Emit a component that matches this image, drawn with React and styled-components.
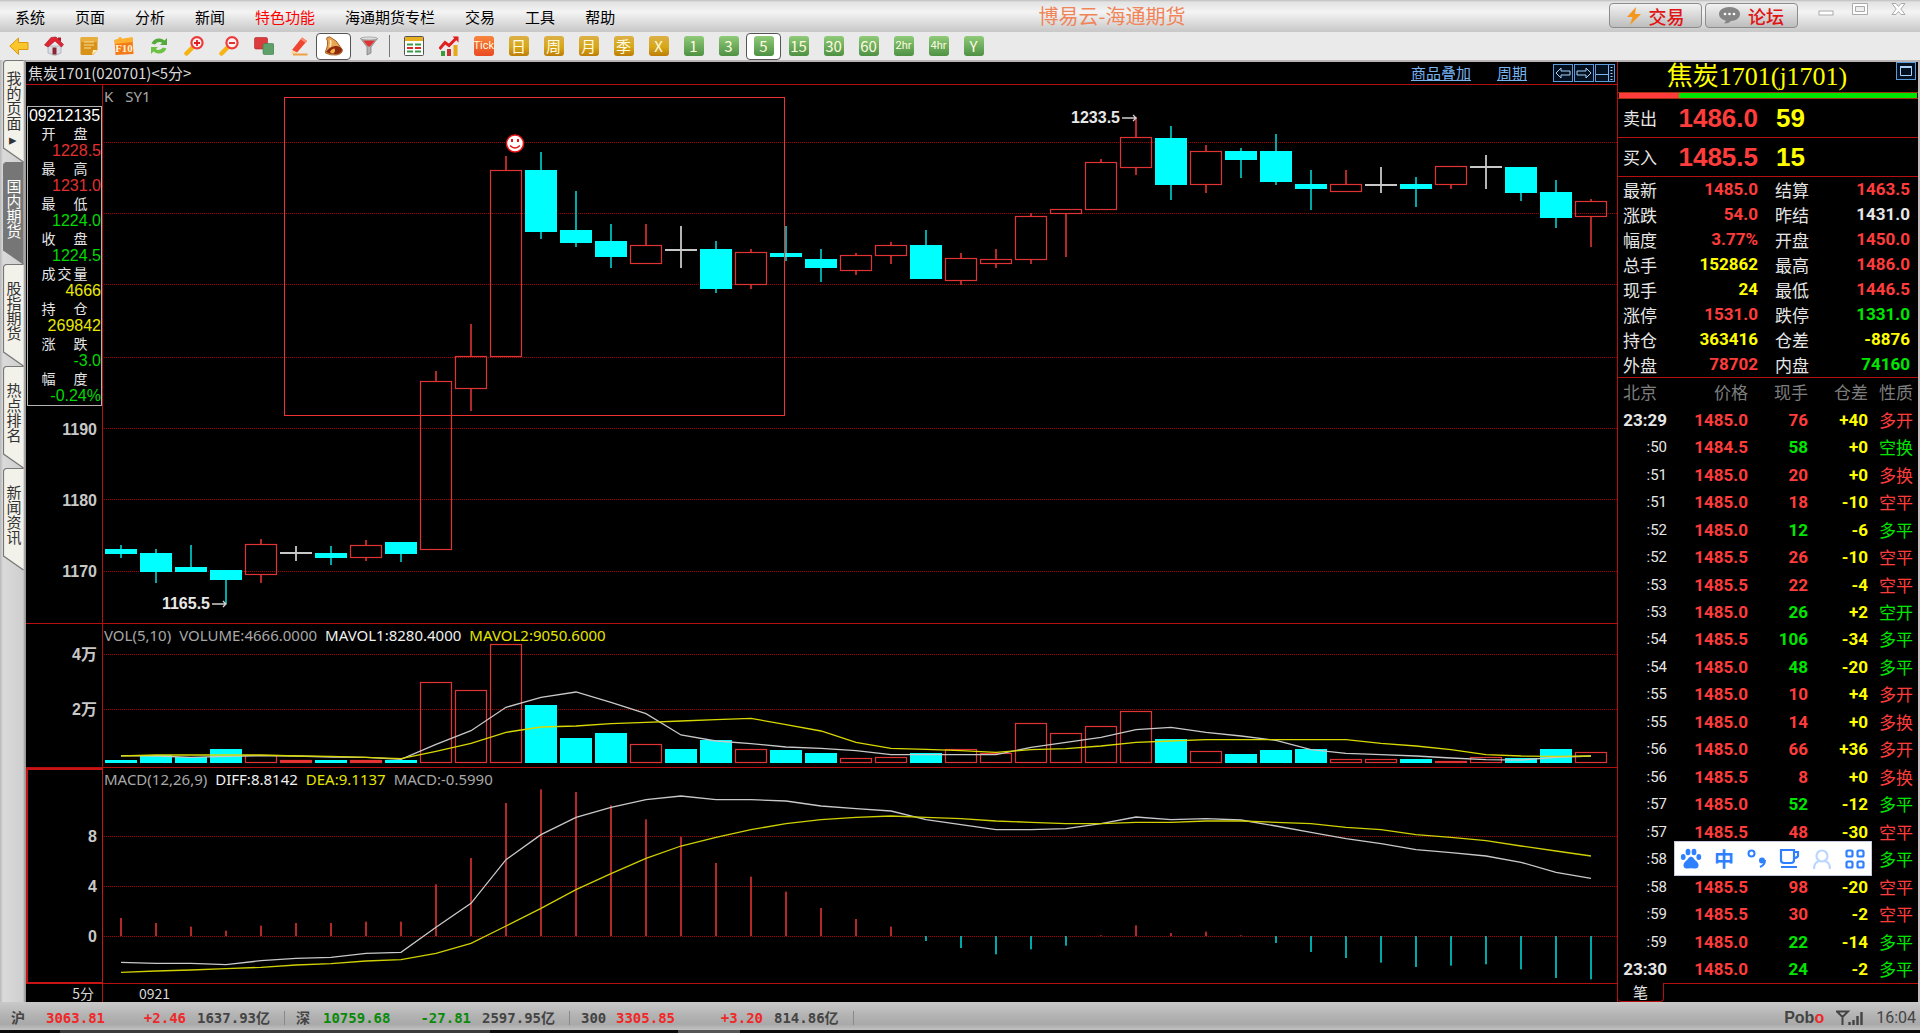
import React from 'react';
import styled, { createGlobalStyle, css } from 'styled-components';

const RED = '#ff3c3c';
const GREEN = '#00e600';
const YELLOW = '#ffff00';
const WHITE = '#e6e6e6';
const LINE = '#b41010';
const CYAN = '#00ffff';

const cjk = '"Noto Sans CJK SC", sans-serif';
const arial = '"Liberation Sans", "Noto Sans CJK SC", sans-serif';

const Global = createGlobalStyle`
  * { box-sizing: border-box; }
  body { margin: 0; background: #000; font-family: ${cjk}; font-size: 15px; line-height: 20px; }
  button { font: inherit; color: inherit; background: none; border: 0; padding: 0; margin: 0; cursor: pointer; }
  svg { display: block; }
`;

const Page = styled.div`
  display: flex;
  flex-direction: column;
  min-height: 100vh;
`;

/* ---------- menu bar ---------- */
const MenuBar = styled.header`
  display: grid;
  grid-template-columns: auto 1fr auto;
  height: 32px;
  padding: 0 11px 0 15px;
  background: linear-gradient(#bdbdbd 0, #e2e2e2 2px, #f4f4f4 12px, #c9c9c9 31px);
`;
const Menus = styled.nav`
  display: flex;
  align-items: center;
  gap: 30px;
  padding-top: 1px;
`;
const MenuItem = styled.button`
  color: ${(p) => (p.$hot ? '#ff0000' : '#000')};
  white-space: nowrap;
`;
const AppTitle = styled.h1`
  margin: 0;
  text-align: center;
  font-size: 20px;
  line-height: 32px;
  font-weight: 400;
  color: #f0855a;
`;
const TopRight = styled.div`
  display: flex;
  justify-content: flex-end;
  align-items: flex-start;
  gap: 3px;
`;
const PillButton = styled.button`
  display: flex;
  align-items: center;
  justify-content: center;
  gap: 8px;
  width: 93px;
  height: 25px;
  margin-top: 3px;
  border: 1px solid #8c8c8c;
  border-radius: 4px;
  background: linear-gradient(#f2f2f2, #d8d8d8 50%, #bdbdbd);
  color: #e01414;
  font-size: 18px;
  line-height: 20px;
  font-weight: 500;
`;
const WindowButtons = styled.div`
  display: flex;
  gap: 14px;
  padding: 2px 0 0 14px;
`;
const WindowButton = styled.button`
  width: 22px;
  height: 16px;
`;

/* ---------- tool bar ---------- */
const ToolBar = styled.div`
  display: flex;
  align-items: center;
  height: 30px;
  padding-left: 1px;
  background: #eaeaea;
  border-bottom: 2px solid #b9b3b3;
`;
const ToolButton = styled.button`
  display: flex;
  align-items: center;
  justify-content: center;
  width: 35px;
  height: 27px;
  border: 1px solid transparent;
  border-radius: 4px;
  ${(p) => p.$active && css`
    background: #fff;
    border-color: #555;
  `}
`;
const Divider = styled.span`
  width: 1px;
  height: 22px;
  margin: 0 6px 0 3px;
  background: #777;
`;
const Badge = styled.span`
  width: 20px;
  height: 20px;
  border-radius: 3px;
  line-height: 20px;
  text-align: center;
  color: #fffbe0;
  font-family: ${(p) => (p.$small ? 'Roboto, sans-serif' : cjk)};
  font-size: ${(p) => (p.$small ? 11 : 15)}px;
  background: ${(p) => ({
    green: 'linear-gradient(#8fcb78, #4f9144)',
    gold: 'linear-gradient(#dcb048, #d7a818 55%, #bd7d08)',
    orange: 'linear-gradient(#f7863c, #ea4a22)',
  }[p.$tone])};
`;

/* ---------- work area ---------- */
const Work = styled.div`
  display: grid;
  grid-template-columns: 26px minmax(0, 1fr) 303px;
  background: #000;
`;
const Tabs = styled.nav`
  display: flex;
  flex-direction: column;
  padding-left: 3px;
  background: linear-gradient(90deg, #b8b8b8, #dadada 3px, #cfcfcf 23px, #9d9898 25px);
  margin-top: -2px;
`;
const Tab = styled.button`
  position: relative;
  display: flex;
  justify-content: center;
  align-items: flex-start;
  width: 21px;
  height: 102px;
  padding-top: ${(p) => (p.$arrow ? 11 : 17)}px;
  color: ${(p) => (p.$active ? '#fff' : '#333')};
`;
const TabShape = styled.svg`
  position: absolute;
  inset: 0;
`;
const TabText = styled.span`
  position: relative;
  writing-mode: vertical-rl;
  text-orientation: upright;
  text-align: start;
  white-space: nowrap;
`;

const ChartArea = styled.main`
  display: grid;
  grid-template-columns: 77px minmax(0, 1fr);
  grid-template-rows: 23px 539px 144px 216px 18px;
`;
const ChartHeader = styled.div`
  grid-column: 1 / -1;
  display: flex;
  align-items: center;
  justify-content: space-between;
  padding: 0 2px;
  border-bottom: 1px solid ${LINE};
  color: #d8d8d8;
`;
const HeaderTools = styled.div`
  display: flex;
  align-items: center;
  gap: 26px;
`;
const HeaderLink = styled.a`
  color: #78b4f0;
  text-decoration: underline;
`;
const BoxButtons = styled.div`
  display: flex;
  gap: 1px;
`;
const BoxButton = styled.button`
  width: 20px;
  height: 18px;
  border: 1px solid #5c9ade;
  background: #03101f;
`;
const AxisCell = styled.div`
  display: flex;
  flex-direction: column;
  align-items: flex-end;
  gap: ${(p) => p.$gap}px;
  padding: ${(p) => p.$top}px 0 0;
  border-right: 1px solid ${LINE};
  border-bottom: 1px solid ${LINE};
  ${(p) => p.$selected && css`
    border: 2px solid #c81414;
    border-right-width: 1px;
  `}
`;
const AxisLabel = styled.span`
  padding-right: 5px;
  font: 700 16px/16px ${arial};
  color: #c8c8c8;
`;
const Plot = styled.section`
  position: relative;
  min-width: 0;
  border-bottom: 1px solid ${LINE};
`;
const PlotSvg = styled.svg`
  width: 100%;
  height: 100%;
`;
const Legend = styled.div`
  position: absolute;
  top: 1px;
  left: 1px;
  display: flex;
  gap: ${(p) => p.$gap || 8}px;
  font: 15px/20px "Noto Sans", sans-serif;
  white-space: nowrap;
`;
const LegendText = styled.span`
  color: ${(p) => p.$color || '#a8a8a8'};
`;
const PriceNote = styled.span`
  position: absolute;
  display: flex;
  align-items: center;
  gap: 2px;
  transform: translate(-100%, -50%);
  font: 700 16px/16px ${arial};
  color: #e8e8e8;
`;
const CandleInfo = styled.dl`
  width: 75px;
  margin: 0 0 0 1px;
  align-self: flex-start;
  border: 1px solid #b4b4b4;
  font: 16px/18px ${arial};
  color: #fff;
`;
const InfoTime = styled.div`
  height: 18px;
  text-align: center;
`;
const InfoTerm = styled.dt`
  display: flex;
  justify-content: space-between;
  width: 46px;
  height: 17px;
  margin: 0 auto;
  font: 14px/17px ${cjk};
  color: ${WHITE};
`;
const InfoValue = styled.dd`
  margin: 0;
  height: 18px;
  text-align: right;
  color: ${(p) => p.$color};
`;
const Scale = styled.div`
  display: flex;
  flex-direction: column;
  gap: 55px;
  margin-top: -39px;
`;
const PeriodCell = styled.div`
  padding-right: 8px;
  border-right: 1px solid ${LINE};
  text-align: right;
  font-size: 14px;
  line-height: 18px;
  color: #d8d8d8;
`;
const DateCell = styled.div`
  padding-left: 36px;
  font-size: 14px;
  line-height: 18px;
  color: #d8d8d8;
`;

/* ---------- quote panel ---------- */
const Quote = styled.aside`
  display: flex;
  flex-direction: column;
  border-left: 1px solid ${LINE};
  border-right: 2px solid #c4bcbc;
`;
const QuoteTitle = styled.div`
  display: grid;
  grid-template-columns: 1fr 22px;
  height: 30px;
`;
const QuoteName = styled.h2`
  margin: 0;
  text-align: center;
  white-space: nowrap;
  font: 400 26px/30px "Liberation Serif", "Noto Sans CJK SC", serif;
  color: ${YELLOW};
`;
const Ratio = styled.div`
  display: flex;
  height: 7px;
  padding: 0 1px;
  border: 1px solid #a03010;
  border-width: 1px 0;
`;
const RatioPart = styled.span`
  flex: ${(p) => p.$share};
  background: ${(p) => p.$color};
`;
const Book = styled.div`
  display: grid;
  grid-template-columns: 36px 99px 1fr;
  align-items: center;
  height: ${(p) => p.$h}px;
  padding-left: 5px;
  border-bottom: 1px solid ${LINE};
  font: 700 26px/38px ${arial};
`;
const BookLabel = styled.span`
  font: 400 17px/38px ${cjk};
  color: ${WHITE};
`;
const BookPrice = styled.span`
  text-align: right;
  color: ${RED};
`;
const BookVolume = styled.span`
  padding-left: 18px;
  color: ${YELLOW};
`;
const Stats = styled.dl`
  display: grid;
  grid-template-columns: 36px 99px 53px 99px;
  margin: 0;
  padding-left: 5px;
  border-bottom: 1px solid ${LINE};
  line-height: 25px;
`;
const StatLabel = styled.dt`
  padding-left: ${(p) => (p.$second ? 17 : 0)}px;
  font-size: 17px;
  color: ${WHITE};
`;
const StatValue = styled.dd`
  margin: 0;
  text-align: right;
  font: 700 17px/25px Roboto, sans-serif;
  color: ${(p) => p.$color};
`;
const Ticks = styled.table`
  flex: 1;
  width: 100%;
  height: 605px;
  border-collapse: collapse;
  table-layout: fixed;
`;
const Th = styled.th`
  height: 28px;
  padding: 0 ${(p) => p.$pad || 0}px 0 0;
  text-align: right;
  width: ${(p) => p.$w}px;
  font: 400 17px/20px ${cjk};
  color: #7d7d7d;
  white-space: nowrap;
`;
const Td = styled.td`
  padding: 0 ${(p) => p.$pad || 0}px 0 0;
  text-align: right;
  white-space: nowrap;
  color: ${(p) => p.$color};
  font: ${(p) => (p.$cjk ? `400 17px/20px ${cjk}` : `${p.$thin ? '400 15px' : '700 17px'}/20px Roboto, sans-serif`)};
`;
const PenRow = styled.div`
  display: flex;
  height: 19px;
`;
const PenTab = styled.button`
  width: 46px;
  height: 19px;
  border: 1px solid ${LINE};
  border-width: 0 1px 1px 0;
  border-radius: 0 0 4px 4px;
  color: ${WHITE};
  line-height: 18px;
`;
const PenFill = styled.div`
  flex: 1;
  border-top: 1px solid ${LINE};
`;

/* ---------- status bar ---------- */
const StatusBar = styled.footer`
  display: flex;
  align-items: center;
  height: 28px;
  padding: 3px 4px 0 11px;
  background: linear-gradient(#c9c9c9, #b2b2b2 50%, #a9a9a9 80%, #c2c2c2);
  color: #444;
  font: 700 14px/20px "DejaVu Sans Mono", "Noto Sans CJK SC", monospace;
`;
const Index = styled.div`
  display: grid;
  grid-template-columns: ${(p) => p.$cols};
  align-items: center;
  height: 20px;
  margin-right: 11px;
  background: linear-gradient(#888, #888) right center / 1px 14px no-repeat;
  white-space: nowrap;
`;
const IndexCell = styled.span`
  color: ${(p) => p.$color || '#444'};
  text-align: ${(p) => (p.$right ? 'right' : 'left')};
  padding-right: ${(p) => (p.$right ? 11 : 0)}px;
`;
const StatusRight = styled.div`
  display: flex;
  align-items: center;
  gap: 12px;
  margin-left: auto;
  font: 400 16px/20px Roboto, sans-serif;
`;
const Brand = styled.span`
  font: 700 16px/20px ${arial};
`;
const BrandDot = styled.span`
  color: #f02828;
`;
const Desk = styled.div`
  flex: 1;
  min-height: 3px;
  background: linear-gradient(90deg, #0a0a0a 60px, #3a3a3a 60px, #3a3a3a 490px, #0a0a0a 490px, #0a0a0a 678px, #555 678px, #555 740px, #0a0a0a 740px);
`;

/* ---------- floating input method bar ---------- */
const ImeBar = styled.div`
  position: absolute;
  top: 841px;
  right: 48px;
  display: flex;
  align-items: center;
  justify-content: space-around;
  width: 198px;
  height: 35px;
  border: 1px solid #c3cbe0;
  background: #fff;
  color: #2f80ff;
`;
const ImeButton = styled.button`
  display: flex;
  align-items: center;
  justify-content: center;
  width: 24px;
  height: 28px;
  font: 700 20px/28px ${cjk};
`;

/* ================= data ================= */
const X0 = 121;
const STEP = 35;
const cx = (i) => X0 + i * STEP;

// kind, body top, body bottom, high, low
const candles = [
  ['c', 549, 554, 545, 558], ['c', 553, 572, 549, 583], ['c', 567, 572, 545, 572], ['c', 570, 580, 570, 604],
  ['r', 545, 575, 539, 583], ['w', 553, 553, 546, 561], ['c', 553, 558, 546, 565], ['r', 546, 558, 540, 561],
  ['c', 542, 554, 542, 562], ['r', 382, 550, 371, 550], ['r', 357, 389, 324, 411], ['r', 171, 357, 156, 357],
  ['c', 170, 232, 152, 239], ['c', 230, 243, 191, 247], ['c', 241, 257, 224, 268], ['r', 246, 264, 224, 264],
  ['w', 250, 250, 226, 268], ['c', 249, 289, 241, 293], ['r', 253, 285, 249, 289], ['c', 253, 257, 226, 261],
  ['c', 259, 268, 249, 282], ['r', 256, 271, 253, 275], ['r', 246, 256, 242, 264], ['c', 245, 279, 230, 279],
  ['r', 259, 281, 253, 285], ['r', 260, 264, 249, 268], ['r', 217, 260, 213, 264], ['r', 210, 214, 210, 257],
  ['r', 163, 210, 159, 210], ['r', 138, 168, 117, 175], ['c', 138, 185, 126, 200], ['r', 152, 185, 145, 193],
  ['c', 151, 160, 148, 178], ['c', 151, 182, 134, 185], ['c', 184, 189, 170, 210], ['r', 185, 192, 170, 192],
  ['w', 185, 185, 167, 193], ['c', 184, 189, 177, 207], ['r', 167, 185, 167, 189], ['w', 167, 167, 155, 189],
  ['c', 167, 193, 167, 201], ['c', 192, 218, 180, 228], ['r', 202, 217, 199, 247],
];
// series below hold thirds of a pixel measured from the top of the volume panel
const y3 = (v) => 620 + v / 3;
const volumes = [421, 406, 412, 388, 406, 421, 421, 421, 421, 187, 209, 73, 256, 354, 339, 373, 388, 361, 388, 391, 399,
  415, 411, 399, 388, 400, 310, 340, 317, 272, 358, 392, 403, 391, 388, 418, 418, 418, 422, 411, 414, 388, 397];
const mavol1 = [407, 408, 412, 409, 407, 408, 411, 412, 418, 373, 332, 262, 232, 216, 247, 281, 345, 363, 371, 381, 385,
  392, 404, 404, 404, 404, 382, 367, 352, 329, 322, 337, 348, 361, 389, 400, 404, 408, 414, 419, 420, 412, 408];
const mavol2 = [408, 405, 405, 405, 405, 408, 409, 412, 416, 394, 370, 337, 321, 318, 311, 307, 303, 299, 295, 314, 333,
  367, 385, 388, 392, 397, 389, 386, 378, 367, 363, 359, 359, 359, 359, 359, 370, 378, 389, 404, 408, 409, 408];
const diff = [1027, 1030, 1030, 1034, 1022, 1015, 1012, 1000, 997, 922, 850, 719, 644, 592, 562, 539, 528, 539, 539, 543, 558,
  566, 573, 599, 614, 629, 629, 626, 611, 591, 599, 596, 600, 618, 637, 656, 671, 689, 698, 708, 727, 757, 775];
const dea = [1057, 1053, 1050, 1046, 1042, 1035, 1031, 1023, 1019, 1000, 970, 918, 865, 809, 761, 715, 678, 652, 629, 611, 599,
  592, 588, 592, 596, 603, 607, 611, 611, 607, 607, 603, 603, 607, 611, 622, 629, 644, 652, 662, 678, 693, 708];
const macd = [894, 909, 920, 932, 917, 909, 909, 905, 905, 793, 714, 549, 508, 516, 556, 598, 650, 729, 770, 815, 864,
  897, 920, 963, 984, 1003, 988, 977, 946, 916, 939, 935, 946, 969, 996, 1014, 1028, 1041, 1037, 1033, 1048, 1074, 1078];

const infoRows = [
  ['开盘', '1228.5', '#e03030'], ['最高', '1231.0', '#e03030'], ['最低', '1224.0', '#00d800'], ['收盘', '1224.5', '#00d800'],
  ['成交量', '4666', '#e8e800'], ['持仓', '269842', '#e8e800'], ['涨跌', '-3.0', '#00d800'], ['幅度', '-0.24%', '#00d800'],
];
const stats = [
  ['最新', '1485.0', RED, '结算', '1463.5', RED],
  ['涨跌', '54.0', RED, '昨结', '1431.0', WHITE],
  ['幅度', '3.77%', RED, '开盘', '1450.0', RED],
  ['总手', '152862', YELLOW, '最高', '1486.0', RED],
  ['现手', '24', YELLOW, '最低', '1446.5', RED],
  ['涨停', '1531.0', RED, '跌停', '1331.0', GREEN],
  ['持仓', '363416', YELLOW, '仓差', '-8876', YELLOW],
  ['外盘', '78702', RED, '内盘', '74160', GREEN],
];
const ticks = [
  ['23:29', '1485.0', '76', '+40', '多开', 'r'], [':50', '1484.5', '58', '+0', '空换', 'g'],
  [':51', '1485.0', '20', '+0', '多换', 'r'], [':51', '1485.0', '18', '-10', '空平', 'r'],
  [':52', '1485.0', '12', '-6', '多平', 'g'], [':52', '1485.5', '26', '-10', '空平', 'r'],
  [':53', '1485.5', '22', '-4', '空平', 'r'], [':53', '1485.0', '26', '+2', '空开', 'g'],
  [':54', '1485.5', '106', '-34', '多平', 'g'], [':54', '1485.0', '48', '-20', '多平', 'g'],
  [':55', '1485.0', '10', '+4', '多开', 'r'], [':55', '1485.0', '14', '+0', '多换', 'r'],
  [':56', '1485.0', '66', '+36', '多开', 'r'], [':56', '1485.5', '8', '+0', '多换', 'r'],
  [':57', '1485.0', '52', '-12', '多平', 'g'], [':57', '1485.5', '48', '-30', '空平', 'r'],
  [':58', '', '', '', '多平', 'g'], [':58', '1485.5', '98', '-20', '空平', 'r'],
  [':59', '1485.5', '30', '-2', '空平', 'r'], [':59', '1485.0', '22', '-14', '多平', 'g'],
  ['23:30', '1485.0', '24', '-2', '多平', 'g'],
];

/* ================= chart pieces ================= */
const points = (list) => list.map((v, i) => `${cx(i)},${y3(v)}`).join(' ');

const Grid = ({ ys }) => ys.map((y) => (
  <line key={y} x1="104" x2="1617" y1={y + 0.5} y2={y + 0.5} stroke="#a80000" strokeDasharray="1 1" shapeRendering="crispEdges" />
));

const Candle = ({ i, data: [kind, top, bottom, high, low] }) => {
  const x = cx(i);
  if (kind === 'w') {
    return (
      <g>
        <rect x={x - 1} y={high} width="2" height={low - high} fill="#b4b4b4" />
        <rect x={x - 16} y={top - 1} width="32" height="2" fill="#c8c8c8" />
      </g>
    );
  }
  const wick = kind === 'c' ? '#00a8a8' : '#b42828';
  return (
    <g>
      {high < top && <rect x={x - 1} y={high} width="2" height={top - high} fill={wick} />}
      {low > bottom && <rect x={x - 1} y={bottom} width="2" height={low - bottom} fill={wick} />}
      {kind === 'c'
        ? <rect x={x - 16} y={top} width="32" height={bottom - top} fill={CYAN} />
        : <rect x={x - 15.5} y={top - 0.5} width="31" height={bottom - top} fill="none" stroke="#e03434" strokeWidth="1.2" />}
    </g>
  );
};

const PriceChart = () => (
  <PlotSvg viewBox="103 85 1514 538" preserveAspectRatio="none" aria-label="K线图">
    <Grid ys={[142, 213, 284, 357, 428, 499, 571]} />
    {candles.map((c, i) => <Candle key={i} i={i} data={c} />)}
    <rect x="284.5" y="97.5" width="500" height="318" fill="none" stroke="#f03232" />
    <g>
      <circle cx="515" cy="143.5" r="8.5" fill="#fff" stroke="#f01414" strokeWidth="1.5" />
      <rect x="511" y="139" width="2" height="3" fill="#e01414" />
      <rect x="517" y="139" width="2" height="3" fill="#e01414" />
      <path d="M510 145.5 Q515 150.5 520 145.5" fill="none" stroke="#e01414" strokeWidth="1.5" />
    </g>
  </PlotSvg>
);

const VolumeChart = () => (
  <PlotSvg viewBox="103 624 1514 143" preserveAspectRatio="none" aria-label="成交量图">
    <Grid ys={[654, 709]} />
    {volumes.map((v, i) => {
      const top = Math.round(y3(v));
      const red = candles[i][0] === 'r' || [5, 36, 39].includes(i);
      return red
        ? <rect key={i} x={cx(i) - 15.5} y={top + 0.5} width="31" height={762 - top} fill={v > 420 ? '#f03232' : 'none'} stroke="#e03434" strokeWidth="1.2" />
        : <rect key={i} x={cx(i) - 16} y={top} width="32" height={763 - top} fill={CYAN} />;
    })}
    <polyline points={points(mavol1)} fill="none" stroke="#c8c8c8" strokeWidth="1.3" />
    <polyline points={points(mavol2)} fill="none" stroke="#d8d800" strokeWidth="1.3" />
  </PlotSvg>
);

const MacdChart = () => (
  <PlotSvg viewBox="103 768 1514 215" preserveAspectRatio="none" aria-label="MACD图">
    <Grid ys={[836, 886, 936]} />
    {macd.map((v, i) => {
      const y = y3(v);
      return <rect key={i} x={cx(i) - 1} y={Math.min(y, 936)} width="2" height={Math.abs(936 - y)} fill={v > 948 ? '#00a8a8' : '#b42828'} />;
    })}
    <polyline points={points(diff)} fill="none" stroke="#c8c8c8" strokeWidth="1.3" />
    <polyline points={points(dea)} fill="none" stroke="#d0d000" strokeWidth="1.3" />
  </PlotSvg>
);

const Note = ({ x, y, children }) => (
  <PriceNote style={{ left: `${((x - 103) / 1514) * 100}%`, top: `${((y - 85) / 538) * 100}%` }}>
    {children}
    <svg width="15" height="8" viewBox="0 0 15 8"><path d="M0 4H14M11 1L14 4L11 7" fill="none" stroke="#d0d0d0" strokeWidth="1.3" /></svg>
  </PriceNote>
);

/* ================= icons ================= */
const Ic = ({ children }) => <svg width="20" height="20" viewBox="0 0 20 20" aria-hidden="true">{children}</svg>;

const Magnifier = ({ plus }) => (
  <Ic>
    <path d="M8 12L2.500 17.500" stroke="#f5b314" strokeWidth="4.500" strokeLinecap="round" />
    <circle cx="13" cy="6.800" r="5.600" fill="#fff2f2" stroke="#ee3c3c" strokeWidth="2.200" />
    <path d={plus ? 'M10 7H16M13 4V10' : 'M10 7H16'} stroke="#e01c1c" strokeWidth="1.800" />
  </Ic>
);

const tools = [
  ['后退', <Ic><path d="M0.800 10L9.500 2V6.500H19V13.500H9.500V18.500Z" fill="#fbc62c" stroke="#d9980f" strokeLinejoin="round" /></Ic>],
  ['主页', <Ic><path d="M4 10H17V17L11 19.500L4 17Z" fill="#dcdce4" stroke="#9a9aa8" strokeWidth="0.600" /><path d="M0.500 9L7 1.500L12 1L19.500 8.500L17.500 11L11 5L4 11Z" fill="#e02434" stroke="#a5101e" strokeWidth="0.600" /><path d="M14 1.500h3v4l-3-2z" fill="#b01828" /><rect x="8.500" y="11.500" width="4" height="7" fill="#8a2430" /></Ic>],
  ['公告', <Ic><path d="M3 1H18Q19 1 18.500 3V14L14 19H3Q1 19 1.500 16V3Q1.500 1 3 1Z" fill="#d99218" /><path d="M3 1H18Q19 1 18.500 3V6H1.500V3Q1.500 1 3 1Z" fill="#e8ad3a" /><path d="M5 6H15M5 9H15M5 12H12" stroke="#f7dc96" strokeWidth="1.100" /><path d="M13 19L14 14H18.500Z" fill="#fff0c0" /></Ic>],
  ['F10', <Ic><path d="M0.500 4L18.500 2L19.500 18L1.500 19Z" fill="#f47a18" /><path d="M0.500 4L4 3L4.500 1.500L7 1L8 2.800L18.500 1L18.800 6L1 8Z" fill="#ffb02e" /><text x="10" y="16" textAnchor="middle" fontFamily="Liberation Serif" fontWeight="700" fontSize="11" fill="#fff4d8">F10</text></Ic>],
  ['刷新', <Ic><path d="M2.500 7.500Q5 2 11 2.500Q14 3 15.500 4.500L18 2V9H11L13.300 6.800Q9 4.800 6 8.500Z" fill="#55a83a" /><path d="M17.500 12.500Q15 18 9 17.500Q6 17 4.500 15.500L2 18V11H9L6.700 13.200Q11 15.200 14 11.500Z" fill="#6cc244" /></Ic>],
  ['放大', <Magnifier plus />],
  ['缩小', <Magnifier />],
  ['叠加', <Ic><rect x="0.500" y="1.500" width="13" height="11.500" rx="1.500" fill="#dc3c3c" stroke="#a82626" strokeWidth="0.600" /><rect x="9" y="7.500" width="11" height="11" rx="1.500" fill="#5fa06a" stroke="#3d7d4b" strokeWidth="0.600" /></Ic>],
  ['画线', <Ic><path d="M3 14L13 1.500L18 5L8 16.500Z" fill="#ee4430" /><path d="M3 14L8 16.500L2 18.500Z" fill="#f7d9a0" /><path d="M13 1.500L18 5L16.500 7L11.500 3.300Z" fill="#ff8a70" /><path d="M4 18.500H18.500" stroke="#f0a040" strokeWidth="2" /></Ic>],
  ['预警', <Ic><path d="M3 1.500Q6 0 7.500 2Q13 4.500 15 9L18.500 14Q18 18.500 12 19Q6 19.500 1.500 17Q1 15.500 2.500 13Q4 9 3.500 5Q2 3 3 1.500Z" fill="#e8a656" stroke="#a05a1c" strokeWidth="0.900" /><path d="M2 16Q5 11 11 10Q16 9.500 18 13.500Q18 17.500 12 18.300Q6 18.500 2 16Z" fill="#8e2a10" /><path d="M6 16Q7 13 10.500 12.500Q12 15 9.500 17.500Q7 17.500 6 16Z" fill="#f6b44c" /><path d="M6.500 4Q7.500 7 6 11" stroke="#ffe6b4" strokeWidth="1.600" fill="none" /></Ic>, true],
  ['筛选', <Ic><path d="M1.500 2.500H18.500L12 11V17L8 19V11Z" fill="#b4b4b4" stroke="#777" strokeWidth="0.700" /><path d="M4 4.500H16L11 10.500H9Z" fill="#e03434" /><ellipse cx="10" cy="2.500" rx="8.500" ry="1.500" fill="#dedede" stroke="#888" strokeWidth="0.600" /></Ic>],
];
const tools2 = [
  ['报价', <Ic><rect x="0.500" y="0.500" width="19" height="19" rx="1" fill="#fff" stroke="#555" /><rect x="1" y="1" width="18" height="4" fill="#e8b020" /><path d="M3 8.500H9M11 8.500H17M3 15.500H9M11 15.500H17" stroke="#3a9a4c" strokeWidth="2" /><path d="M3 12H9M11 12H17" stroke="#e02828" strokeWidth="2" /></Ic>],
  ['走势', <Ic><path d="M0.500 13L6 6.500L10 9.500L18 1.500" fill="none" stroke="#e02020" strokeWidth="3" /><path d="M13.500 0.500H19.500V6.500Z" fill="#e02020" /><rect x="2" y="15" width="4" height="5" fill="#3c9c3c" /><rect x="8" y="13" width="4" height="7" fill="#c83232" /><rect x="14.500" y="9" width="4" height="11" fill="#e8a818" /></Ic>],
];
const periods = [
  ['Tick', 'orange', true], ['日', 'gold'], ['周', 'gold'], ['月', 'gold'], ['季', 'gold'], ['X', 'gold'], ['1', 'green'], ['3', 'green'],
  ['5', 'green'], ['15', 'green'], ['30', 'green'], ['60', 'green'], ['2hr', 'green', true], ['4hr', 'green', true], ['Y', 'green'],
];

const SideTab = ({ label, active, arrow }) => (
  <Tab $active={active} $arrow={arrow}>
    <TabShape width="21" height="104" viewBox="0 0 21 104" aria-hidden="true">
      <path d="M20.500 0.500H4Q0.500 0.500 0.500 4V88L20.500 102" fill={active ? '#767676' : '#f2f1ea'} stroke="#777" strokeWidth="1.200" />
    </TabShape>
    <TabText>{label}{arrow ? '▸' : ''}</TabText>
  </Tab>
);

export default function App() {
  return (
    <Page>
      <Global />
      <MenuBar>
        <Menus>
          {['系统', '页面', '分析', '新闻', '特色功能', '海通期货专栏', '交易', '工具', '帮助'].map((m) => (
            <MenuItem key={m} $hot={m === '特色功能'}>{m}</MenuItem>
          ))}
        </Menus>
        <AppTitle>博易云-海通期货</AppTitle>
        <TopRight>
          <PillButton>
            <svg width="14" height="18" viewBox="0 0 14 18"><path d="M9 0L0 10H5.500L3 18L14 7H8Z" fill="#f5961e" /></svg>
            交易
          </PillButton>
          <PillButton>
            <svg width="21" height="17" viewBox="0 0 21 17"><path d="M10.500 0C16.500 0 21 3 21 7C21 11 17 14 12 14Q10 16.500 5 16.500Q7 15 6.500 13.500C2.500 12.500 0 10 0 7C0 3 4.500 0 10.500 0Z" fill="#858585" /><circle cx="6" cy="7" r="1.300" fill="#fff" /><circle cx="10.500" cy="7" r="1.300" fill="#fff" /><circle cx="15" cy="7" r="1.300" fill="#fff" /></svg>
            论坛
          </PillButton>
          <WindowButtons>
            <WindowButton aria-label="最小化"><svg width="22" height="16" viewBox="0 0 22 16"><rect x="4" y="9" width="14" height="4" fill="#fff" stroke="#aaa" /></svg></WindowButton>
            <WindowButton aria-label="最大化"><svg width="22" height="16" viewBox="0 0 22 16"><path d="M1.500 1.500H16.500V12.500H1.500ZM4.500 4.500V9.500H13.500V4.500Z" fillRule="evenodd" fill="#fff" stroke="#aaa" /></svg></WindowButton>
            <WindowButton aria-label="关闭"><svg width="22" height="16" viewBox="0 0 22 16"><path d="M5 1.500H9L11.500 4.500L14 1.500H18L13.800 7L18 12.500H14L11.500 9.500L9 12.500H5L9.200 7Z" fill="#fff" stroke="#aaa" /></svg></WindowButton>
          </WindowButtons>
        </TopRight>
      </MenuBar>

      <ToolBar>
        {tools.map(([name, icon, active]) => <ToolButton key={name} aria-label={name} $active={active}>{icon}</ToolButton>)}
        <Divider />
        {tools2.map(([name, icon]) => <ToolButton key={name} aria-label={name}>{icon}</ToolButton>)}
        {periods.map(([name, tone, small]) => (
          <ToolButton key={name} $active={name === '5'}><Badge $tone={tone} $small={small}>{name}</Badge></ToolButton>
        ))}
      </ToolBar>

      <Work>
        <Tabs>
          <SideTab label="我的页面" arrow />
          <SideTab label="国内期货" active />
          <SideTab label="股指期货" />
          <SideTab label="热点排名" />
          <SideTab label="新闻资讯" />
        </Tabs>

        <ChartArea>
          <ChartHeader>
            <span>焦炭1701(020701)&lt;5分&gt;</span>
            <HeaderTools>
              <HeaderLink href="#overlay">商品叠加</HeaderLink>
              <HeaderLink href="#period">周期</HeaderLink>
              <BoxButtons>
                <BoxButton aria-label="向左"><svg width="18" height="16" viewBox="0 0 18 16"><path d="M2 8L7 3V6H16V10H7V13Z" fill="none" stroke="#a8d0f8" /></svg></BoxButton>
                <BoxButton aria-label="向右"><svg width="18" height="16" viewBox="0 0 18 16"><path d="M16 8L11 3V6H2V10H11V13Z" fill="none" stroke="#a8d0f8" /></svg></BoxButton>
                <BoxButton aria-label="布局"><svg width="18" height="16" viewBox="0 0 18 16"><path d="M0 9.500H12M12.500 0V16" stroke="#78b4f0" /><path d="M15.500 2V15" stroke="#a8d0f8" strokeWidth="2" strokeDasharray="1 2" /></svg></BoxButton>
              </BoxButtons>
            </HeaderTools>
          </ChartHeader>

          <AxisCell $top={21} $gap={55}>
            <CandleInfo>
              <InfoTime>09212135</InfoTime>
              {infoRows.map(([name, value, color]) => (
                <React.Fragment key={name}>
                  <InfoTerm>{[...name].map((ch) => <span key={ch}>{ch}</span>)}</InfoTerm>
                  <InfoValue $color={color}>{value}</InfoValue>
                </React.Fragment>
              ))}
            </CandleInfo>
            <Scale>
              <AxisLabel>1190</AxisLabel>
              <AxisLabel>1180</AxisLabel>
              <AxisLabel>1170</AxisLabel>
            </Scale>
          </AxisCell>
          <Plot>
            <PriceChart />
            <Legend $gap={12}><LegendText>K</LegendText><LegendText>SY1</LegendText></Legend>
            <Note x={1137} y={118}>1233.5</Note>
            <Note x={227} y={604}>1165.5</Note>
          </Plot>

          <AxisCell $top={23} $gap={39}>
            <AxisLabel>4万</AxisLabel>
            <AxisLabel>2万</AxisLabel>
          </AxisCell>
          <Plot>
            <VolumeChart />
            <Legend>
              <LegendText>VOL(5,10)</LegendText>
              <LegendText>VOLUME:4666.0000</LegendText>
              <LegendText $color="#f0f0f0">MAVOL1:8280.4000</LegendText>
              <LegendText $color="#e6e600">MAVOL2:9050.6000</LegendText>
            </Legend>
          </Plot>

          <AxisCell $top={59} $gap={34} $selected>
            <AxisLabel>8</AxisLabel>
            <AxisLabel>4</AxisLabel>
            <AxisLabel>0</AxisLabel>
          </AxisCell>
          <Plot>
            <MacdChart />
            <Legend>
              <LegendText>MACD(12,26,9)</LegendText>
              <LegendText $color="#f0f0f0">DIFF:8.8142</LegendText>
              <LegendText $color="#e6e600">DEA:9.1137</LegendText>
              <LegendText>MACD:-0.5990</LegendText>
            </Legend>
          </Plot>

          <PeriodCell>5分</PeriodCell>
          <DateCell>0921</DateCell>
        </ChartArea>

        <Quote>
          <QuoteTitle>
            <QuoteName>焦炭1701(j1701)</QuoteName>
            <BoxButton aria-label="窗口"><svg width="18" height="16" viewBox="0 0 18 16"><path d="M3.500 3.500H14.500V12.500H3.500Z" fill="none" stroke="#a8d0f8" /><path d="M3 4H15" stroke="#a8d0f8" strokeWidth="2" /></svg></BoxButton>
          </QuoteTitle>
          <Ratio><RatioPart $share={20} $color={RED} /><RatioPart $share={80} $color={GREEN} /></Ratio>
          <Book $h={39}><BookLabel>卖出</BookLabel><BookPrice>1486.0</BookPrice><BookVolume>59</BookVolume></Book>
          <Book $h={39}><BookLabel>买入</BookLabel><BookPrice>1485.5</BookPrice><BookVolume>15</BookVolume></Book>
          <Stats>
            {stats.map(([a, av, ac, b, bv, bc]) => (
              <React.Fragment key={a}>
                <StatLabel>{a}</StatLabel><StatValue $color={ac}>{av}</StatValue>
                <StatLabel $second>{b}</StatLabel><StatValue $color={bc}>{bv}</StatValue>
              </React.Fragment>
            ))}
          </Stats>
          <Ticks>
            <thead>
              <tr>
                <Th $w={49} $pad={10}>北京</Th>
                <Th $w={81}>价格</Th>
                <Th $w={60}>现手</Th>
                <Th $w={60}>仓差</Th>
                <Th $w={50} $pad={5}>性质</Th>
              </tr>
            </thead>
            <tbody>
              {ticks.map(([time, price, lots, change, kind, tone], i) => {
                const color = tone === 'r' ? RED : GREEN;
                return (
                  <tr key={i}>
                    <Td $color={WHITE} $thin={time.length < 4}>{time}</Td>
                    <Td $color={RED}>{price}</Td>
                    <Td $color={color}>{lots}</Td>
                    <Td $color={YELLOW}>{change}</Td>
                    <Td $color={color} $cjk $pad={5}>{kind}</Td>
                  </tr>
                );
              })}
            </tbody>
          </Ticks>
          <PenRow><PenTab>笔</PenTab><PenFill /></PenRow>
        </Quote>
      </Work>

      <StatusBar>
        <Index $cols="35px 72px 79px 88px">
          <IndexCell>沪</IndexCell><IndexCell $color="#f02828">3063.81</IndexCell>
          <IndexCell $right $color="#f02828">+2.46</IndexCell><IndexCell>1637.93亿</IndexCell>
        </Index>
        <Index $cols="27px 80px 79px 88px">
          <IndexCell>深</IndexCell><IndexCell $color="#0a8a0a">10759.68</IndexCell>
          <IndexCell $right $color="#0a8a0a">-27.81</IndexCell><IndexCell>2597.95亿</IndexCell>
        </Index>
        <Index $cols="35px 72px 86px 80px">
          <IndexCell>300</IndexCell><IndexCell $color="#f02828">3305.85</IndexCell>
          <IndexCell $right $color="#f02828">+3.20</IndexCell><IndexCell>814.86亿</IndexCell>
        </Index>
        <StatusRight>
          <Brand>Pob<BrandDot>o</BrandDot></Brand>
          <svg width="28" height="16" viewBox="0 0 28 16"><path d="M1 1.500H12L6.500 7ZM6.500 6V15" fill="none" stroke="#444" strokeWidth="2" /><path d="M13.500 12V15M17.500 10V15M21.500 6V15M25.500 2V15" stroke="#444" strokeWidth="2.400" /></svg>
          <span>16:04</span>
        </StatusRight>
      </StatusBar>
      <Desk />

      <ImeBar>
        <ImeButton aria-label="输入法">
          <svg width="22" height="22" viewBox="0 0 22 22" fill="currentColor"><ellipse cx="3.200" cy="9" rx="2.400" ry="3" /><ellipse cx="8" cy="4" rx="2.400" ry="3.200" /><ellipse cx="14" cy="4" rx="2.400" ry="3.200" /><ellipse cx="18.800" cy="9" rx="2.400" ry="3" /><path d="M11 8.500Q13 8.500 15 12Q19 15 18.500 18Q18 21 14.500 20.500Q11 19.800 7.500 20.500Q4 21 3.500 18Q3 15 7 12Q9 8.500 11 8.500Z" /></svg>
        </ImeButton>
        <ImeButton>中</ImeButton>
        <ImeButton aria-label="标点">
          <svg width="20" height="20" viewBox="0 0 20 20"><circle cx="4.500" cy="4.500" r="3" fill="none" stroke="currentColor" strokeWidth="2" /><circle cx="15" cy="11.500" r="3" fill="currentColor" /><path d="M18 11Q18 16 13 18" fill="none" stroke="currentColor" strokeWidth="2" /></svg>
        </ImeButton>
        <ImeButton aria-label="皮肤">
          <svg width="21" height="21" viewBox="0 0 21 21" fill="none" stroke="currentColor" strokeWidth="2.200"><path d="M2 2H15V12Q15 15 12 15H5Q2 15 2 12ZM15 4H19V8Q18 10 15 10M2 19H18" /></svg>
        </ImeButton>
        <ImeButton aria-label="账户">
          <svg width="20" height="20" viewBox="0 0 20 20" fill="none" stroke="#bcd6ff" strokeWidth="2.200"><circle cx="10" cy="7" r="5.500" /><path d="M2 20Q2 13.500 7 12M18 20Q18 13.500 13 12" /></svg>
        </ImeButton>
        <ImeButton aria-label="工具箱">
          <svg width="20" height="20" viewBox="0 0 20 20" fill="none" stroke="currentColor" strokeWidth="2.200"><rect x="1.500" y="1.500" width="6" height="6" rx="1.500" /><rect x="12.500" y="1.500" width="6" height="6" rx="1.500" /><rect x="1.500" y="12.500" width="6" height="6" rx="1.500" /><rect x="12.500" y="12.500" width="6" height="6" rx="1.500" /></svg>
        </ImeButton>
      </ImeBar>
    </Page>
  );
}
